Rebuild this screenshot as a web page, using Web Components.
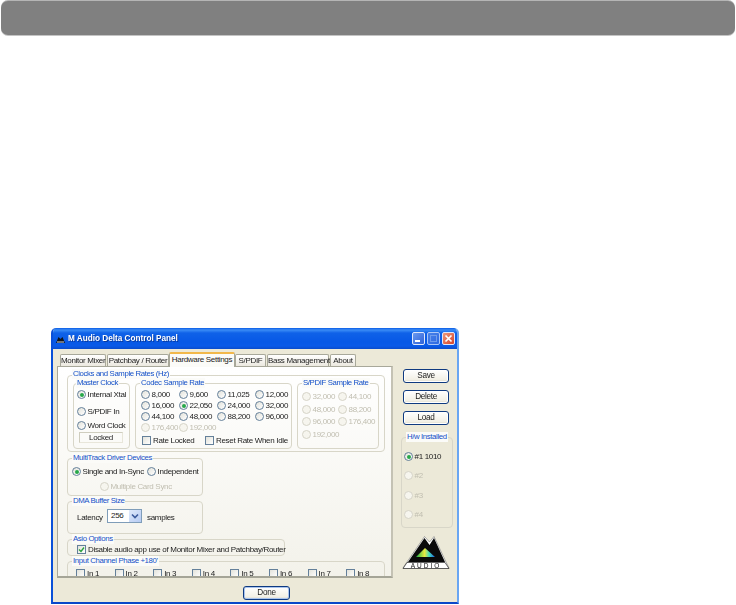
<!DOCTYPE html>
<html><head><meta charset="utf-8">
<style>
html,body{margin:0;padding:0;background:#fff;}
body{font:8px/11px "Liberation Sans",Arial,sans-serif;letter-spacing:-.32px;color:#1c1c1c;overflow:hidden;height:605px;}
x-group.clocks{width:318px;height:77px;display:flex;gap:5px;padding:7px 0 0 5px;}
x-group.master{width:57px;height:66px;padding:5px 0 0 3px;}
x-group.codec{width:157px;height:66px;padding:5px 0 0 5px;}
x-group.spdif{width:82px;height:66px;padding:7px 0 0 4px;}
x-group.multi{width:136px;height:38px;padding:7px 0 0 4px;margin-top:6px;}
x-group.dma{width:136px;height:33px;padding:7px 0 0 9px;margin-top:5px;display:flex;align-items:flex-start;gap:5px;}
x-group.asio{width:218px;height:17px;padding:4px 0 0 9px;margin-top:5px;}
x-group.input{width:318px;height:24px;padding:6px 0 0 8px;margin-top:5px;display:grid;grid-template-columns:repeat(8,38.6px);}
x-group.hw{width:52px;height:91px;padding:13px 0 0 2px;margin-top:5px;display:flex;flex-direction:column;gap:8.300px;}
.grid4{display:grid;grid-template-columns:repeat(4,38px);grid-auto-rows:11px;}
.grid4 .wide{grid-row:4;}
.grid2{display:grid;grid-template-columns:36px 40px;grid-auto-rows:11px;row-gap:1.7px;}
.checks{display:flex;gap:0;margin:2px 0 0 1px;}
.checks x-check:first-child{width:63px;}
.row{display:flex;}
.gap6{margin-top:6px}.gap3{margin-top:3px}
.single{width:75px}
.sync{margin:4px 0 0 28px}
</style></head>
<body>
<x-banner></x-banner>
<x-window title-text="M Audio Delta Control Panel">
  <x-tabs>
    <x-tab style="width:46px">Monitor Mixer</x-tab>
    <x-tab style="width:62px">Patchbay / Router</x-tab>
    <x-tab active style="width:66px">Hardware Settings</x-tab>
    <x-tab style="width:31px">S/PDIF</x-tab>
    <x-tab style="width:62px">Bass Management</x-tab>
    <x-tab style="width:26px">About</x-tab>
  </x-tabs>
  <x-panel>
    <x-group class="clocks" legend="Clocks and Sample Rates (Hz)">
      <x-group class="master" legend="Master Clock">
        <x-radio checked>Internal Xtal</x-radio>
        <x-radio class="gap6">S/PDIF In</x-radio>
        <x-radio class="gap3">Word Clock</x-radio>
        <x-status>Locked</x-status>
      </x-group>
      <x-group class="codec" legend="Codec Sample Rate">
        <div class="grid4">
          <x-radio>8,000</x-radio><x-radio>9,600</x-radio><x-radio>11,025</x-radio><x-radio>12,000</x-radio>
          <x-radio>16,000</x-radio><x-radio checked>22,050</x-radio><x-radio>24,000</x-radio><x-radio>32,000</x-radio>
          <x-radio>44,100</x-radio><x-radio>48,000</x-radio><x-radio>88,200</x-radio><x-radio>96,000</x-radio>
          <x-radio disabled class="wide">176,400</x-radio><x-radio disabled class="wide">192,000</x-radio>
        </div>
        <div class="checks"><x-check>Rate Locked</x-check><x-check>Reset Rate When Idle</x-check></div>
      </x-group>
      <x-group class="spdif" legend="S/PDIF Sample Rate">
        <div class="grid2">
          <x-radio disabled>32,000</x-radio><x-radio disabled>44,100</x-radio>
          <x-radio disabled>48,000</x-radio><x-radio disabled>88,200</x-radio>
          <x-radio disabled>96,000</x-radio><x-radio disabled>176,400</x-radio>
          <x-radio disabled>192,000</x-radio>
        </div>
      </x-group>
    </x-group>
    <x-group class="multi" legend="MultiTrack Driver Devices">
      <div class="row"><x-radio checked class="single">Single and In-Sync</x-radio><x-radio>Independent</x-radio></div>
      <x-radio disabled class="sync">Multiple Card Sync</x-radio>
    </x-group>
    <x-group class="dma" legend="DMA Buffer Size">
      <span style="margin-top:3px;width:25px">Latency</span>
      <x-select>256</x-select>
      <span style="margin-top:3px">samples</span>
    </x-group>
    <x-group class="asio" legend="Asio Options">
      <x-check checked>Disable audio app use of Monitor Mixer and Patchbay/Router</x-check>
    </x-group>
    <x-group class="input" legend="Input Channel Phase +180'">
      <x-check>In 1</x-check><x-check>In 2</x-check><x-check>In 3</x-check><x-check>In 4</x-check>
      <x-check>In 5</x-check><x-check>In 6</x-check><x-check>In 7</x-check><x-check>In 8</x-check>
    </x-group>
  </x-panel>
  <x-side slot="side">
    <x-btn>Save</x-btn>
    <x-btn>Delete</x-btn>
    <x-btn>Load</x-btn>
    <x-group class="hw" legend="H/w Installed">
      <x-radio checked>#1 1010</x-radio>
      <x-radio disabled>#2</x-radio>
      <x-radio disabled>#3</x-radio>
      <x-radio disabled>#4</x-radio>
    </x-group>
    <x-logo></x-logo>
  </x-side>
  <x-btn slot="done" default>Done</x-btn>
</x-window>
<script>
function def(name, html, setup){
  customElements.define(name, class extends HTMLElement{
    constructor(){super();this.attachShadow({mode:'open'}).innerHTML=html;}
    connectedCallback(){ if(setup) setup(this); }
  });
}
def('x-banner',`<style>:host{display:block;height:34px;margin:1px 1px 0;background:#808080;border-radius:7px;box-shadow:0 -1px 0 #b5b5b5,0 1px 0 #c4c4c4;}</style>`);
def('x-window',`<style>
:host{display:flex;flex-direction:column;box-sizing:border-box;width:408px;height:276px;margin:293px 0 0 51px;background:#ece9d8;
 border-radius:5px 5px 0 0;border-left:2px solid #0a50d8;border-right:2px solid #6aa6f2;border-bottom:2px solid #0a48c8;overflow:hidden;filter:blur(.4px);}
.bar{height:21px;flex:none;margin:0 -2px;padding:0 4px 0 5px;display:flex;align-items:center;
 background:linear-gradient(#0a5be6 0,#3a8cf6 2px,#0f62e8 5px,#0758e6 14px,#0a5ae8 18px,#0a4ccc 21px);color:#fff;font:bold 8.200px "Liberation Sans",Arial,sans-serif;letter-spacing:0;}
.ico{width:9px;height:8px;margin-right:3px;flex:none}
.t{flex:1;text-shadow:1px 1px 0 #0a3a9c}
.b{width:13px;height:13px;margin-left:2px;border-radius:2px;border:1px solid #dfe8fb;box-sizing:border-box;flex:none;position:relative;}
.min{background:linear-gradient(135deg,#6b9af0,#2e62d8)}
.min::after{content:"";position:absolute;left:2px;bottom:2px;width:5px;height:2px;background:#fff}
.max{background:linear-gradient(135deg,#5b8dea,#3b6fe0);opacity:.75}
.max::after{content:"";position:absolute;inset:2px;border:1px solid #8fb0ef}
.cl{background:linear-gradient(135deg,#ee9a7c,#d5442a)}
.top{display:flex;flex:none;padding:4px 0 0 4px;gap:8px}
.left{width:336px;flex:none;display:flex;flex-direction:column}
.done{padding:8px 0 0 190px}
</style>
<div class="bar">
 <svg class="ico" viewBox="0 0 9 8"><path d="M0 8 L2.500 2 L4.500 4 L6.500 2 L9 8Z" fill="#10151c"/><path d="M1 7h7" stroke="#d8d8d8"/></svg>
 <span class="t"></span>
 <span class="b min"></span><span class="b max"></span>
 <span class="b cl"><svg width="11" height="11" viewBox="0 0 11 11"><path d="M2.500 2.500l6 6M8.500 2.500l-6 6" stroke="#fff" stroke-width="1.700"/></svg></span>
</div>
<div class="top"><div class="left"><slot></slot></div><slot name="side"></slot></div>
<div class="done"><slot name="done"></slot></div>`,
 el=>{el.shadowRoot.querySelector('.t').textContent=el.getAttribute('title-text');});
def('x-tabs',`<style>:host{display:flex;height:13px;flex:none;padding-left:3px;box-sizing:border-box;gap:1px;align-items:flex-end}</style><slot></slot>`);
def('x-tab',`<style>
:host{display:block;box-sizing:border-box;height:12px;border:1px solid #a8a89a;border-bottom:0;border-radius:2px 2px 0 0;
 background:linear-gradient(#fff,#ece9e0);text-align:center;font-size:8px;line-height:11px;white-space:nowrap;color:#1c1c1c;}
:host([active]){height:15px;margin:0 -1px -1px -1px;background:#fbfbf8;border-top:2px solid #f2b84a;border-color:#f2b84a #a8a89a #fbfbf8;position:relative;z-index:1}
</style><slot></slot>`);
def('x-panel',`<style>:host{display:block;box-sizing:border-box;height:212px;padding:8px 0 0 9px;border:1px solid #a8a89a;border-bottom:2px solid #a5a597;border-right:2px solid #c4c2b4;background:linear-gradient(#fff,#f3f2ea);overflow:hidden;}</style><slot></slot>`);
def('x-group',`<style>
:host{display:block;box-sizing:border-box;position:relative;border:1px solid #d8d6c8;border-radius:4px;}
.l{position:absolute;top:-6px;left:4px;background:#fbfbf8;padding:0 1px;color:#1450c8;font-size:7.800px;letter-spacing:-.38px;line-height:10px;white-space:nowrap;}
</style><span class="l"></span><slot></slot>`,
 el=>{const l=el.shadowRoot.querySelector('.l');l.textContent=el.getAttribute('legend');
  if(el.classList.contains('master')) l.style.left='2px';
  if(el.classList.contains('clocks')) l.style.top='-7px';});
def('x-radio',`<style>
:host{display:flex;align-items:center;height:11px;white-space:nowrap;font-size:8px;color:#1c1c1c;}
.c{width:9px;height:9px;border-radius:50%;border:1px solid #64809a;box-sizing:border-box;background:linear-gradient(135deg,#e2e2da,#fff);margin-right:1.500px;flex:none;display:flex;align-items:center;justify-content:center}
.d{width:4px;height:4px;border-radius:50%;background:#27a84a;display:none}
:host([checked]) .d{display:block}
:host([disabled]){color:#c0beb0}
:host([disabled]) .c{border-color:#d6d4c8;background:#f6f5ee}
</style><span class="c"><span class="d"></span></span><span><slot></slot></span>`);
def('x-check',`<style>
:host{display:flex;align-items:center;height:11px;white-space:nowrap;font-size:8px;color:#1c1c1c;}
.c{width:9px;height:9px;border:1px solid #64809a;box-sizing:border-box;background:linear-gradient(135deg,#e2e2da,#fff);margin-right:2px;flex:none;position:relative}
svg{position:absolute;left:0;top:0;display:none}
:host([checked]) svg{display:block}
</style><span class="c"><svg width="7" height="7" viewBox="0 0 7 7"><path d="M1 3.500L3 5.500L6 1.500" fill="none" stroke="#28a23c" stroke-width="1.400"/></svg></span><span><slot></slot></span>`);
def('x-status',`<style>:host{display:block;box-sizing:border-box;width:44px;height:11px;margin:1px 0 0 2px;border:1px solid #cfcdbe;border-right-color:#e8e6da;border-bottom-color:#e8e6da;text-align:center;font-size:8px;line-height:9px;color:#1c1c1c}</style><slot></slot>`);
def('x-select',`<style>
:host{display:flex;box-sizing:border-box;width:35px;height:14px;border:1px solid #7f9db9;background:#fff;font-size:8px;line-height:12px;padding-left:3px;position:relative}
.b{position:absolute;right:0;top:0;width:12px;height:12px;background:linear-gradient(135deg,#dfe9fb,#b6cbf3);display:flex;align-items:center;justify-content:center}
</style><slot></slot><span class="b"><svg width="8" height="6" viewBox="0 0 8 6"><path d="M1 1.500L4 4.500L7 1.500" fill="none" stroke="#3c5a9c" stroke-width="1.600"/></svg></span>`);
def('x-side',`<style>:host{display:flex;flex-direction:column;align-items:flex-start;padding-top:16px;width:54px}
::slotted(x-btn){margin:0 0 7px 2px}
</style><slot></slot>`);
def('x-btn',`<style>
:host{display:block;box-sizing:border-box;width:46px;height:14px;border:1px solid #0f3a80;border-radius:3px;background:linear-gradient(#fff,#f2f0e6 80%,#dcd8c8);text-align:center;font-size:8.200px;line-height:12px;color:#1c1c1c;box-shadow:inset 0 0 0 1px #fff}
:host([default]){box-shadow:inset 0 0 0 1px #a9c4ee;width:47px}
</style><slot></slot>`);
def('x-logo',`<style>:host{display:block;width:48px;height:34px;margin:8px 0 0 1px}svg{display:block}</style>
<svg width="48" height="34" viewBox="0 0 48 34">
<defs><linearGradient id="rb" x1="0" y1="0" x2="1" y2="0"><stop offset="0" stop-color="#18b048"/><stop offset=".45" stop-color="#e8e840"/><stop offset=".7" stop-color="#40d8c0"/><stop offset="1" stop-color="#2060e0"/></linearGradient></defs>
<path d="M5 26 L22.500 .5 L27.500 6 L32 .5 L44 26 L47 32 L1 32 Z" fill="#fff" stroke="#777" stroke-width=".6"/>
<path d="M6 26 L22.500 2 L27.500 9 L32 2 L43 26 Z" fill="#0a0a0a"/>
<path d="M23 12 L14 21 L33 21 Z" fill="url(#rb)"/>
<path d="M5 26.500 L43 26.500 L47 32.500 L1 32.500 Z" fill="#fff" stroke="#222" stroke-width=".7"/>
<text x="24" y="32" text-anchor="middle" font-family="Liberation Sans" font-size="6.500" letter-spacing="2" fill="#111">AUDIO</text>
</svg>`);
</script>
</body></html>
